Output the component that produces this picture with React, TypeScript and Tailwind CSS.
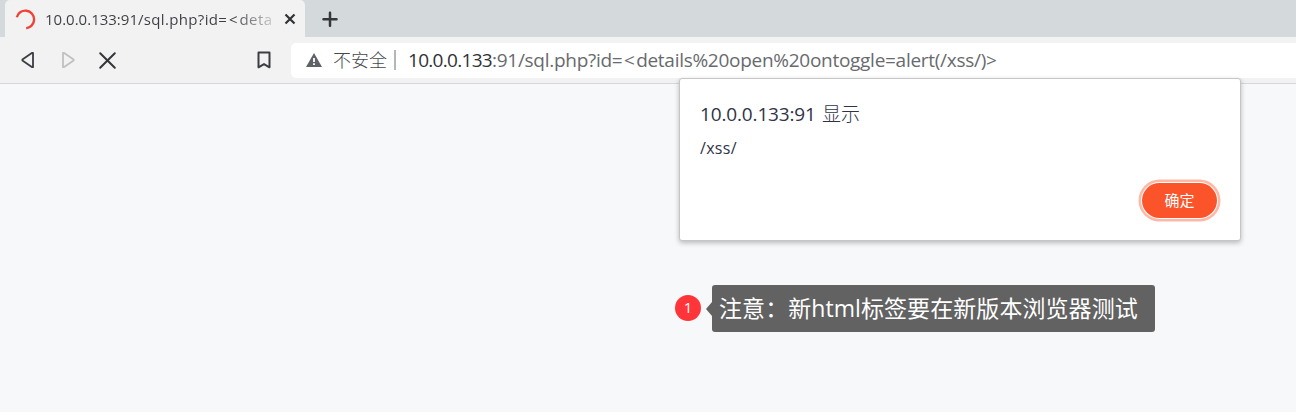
const latin = "font-['Open_Sans','Noto_Sans_CJK_SC',sans-serif]";

function Tab() {
  return (
    <div className="ml-[5px] flex h-[37px] w-[300px] items-center rounded-t-[5px] bg-[#f2f2f2] pl-[10px]">
      <svg className="mt-px size-[21px] shrink-0" viewBox="0 0 21 21" fill="none" stroke="#ee4438" strokeWidth="2.4">
        <path d="M1.8 8.2A8.8 8.8 0 1 1 11.2 19.2" />
      </svg>
      <div className="ml-[9px] w-[229px] whitespace-nowrap bg-[linear-gradient(90deg,#3b3d43_82%,#3b3d4330_100%)] bg-clip-text text-[15px] leading-[22px] text-transparent">
        10.0.0.133:91<span className="tracking-[0.35px]">/sql.php?id</span><span className="tracking-[2px]">=&lt;</span><span className="tracking-[0.4px]">deta</span>
      </div>
      <svg className="ml-[10px] size-3 shrink-0" viewBox="0 0 12 12" stroke="#303236" strokeWidth="2.2">
        <path d="M1.5 1.5l9 9M10.5 1.5l-9 9" />
      </svg>
    </div>
  );
}

function Toolbar() {
  return (
    <div className="flex h-[47px] items-center border-b border-[#d5d7da] bg-[#f2f2f2]">
      <svg className="ml-5 h-[18px] w-4 shrink-0" viewBox="0 0 16 18" fill="none" stroke="#3b3d42" strokeWidth="1.8" strokeLinejoin="round">
        <path d="M13 1.8v14.4h-.8L2.4 9.6V8.4L12.2 1.8z" />
      </svg>
      <svg className="ml-[25px] h-[18px] w-4 shrink-0" viewBox="0 0 16 18" fill="none" stroke="#bfc0c2" strokeWidth="1.8" strokeLinejoin="round">
        <path d="M2 1.8v14.4h.8l9.8-6.6V8.4L2.8 1.8z" />
      </svg>
      <svg className="ml-[21px] size-[19px] shrink-0" viewBox="0 0 19 19" stroke="#34363a" strokeWidth="2" strokeLinecap="round">
        <path d="M2.2 2.2l14.6 14.6M16.8 2.2L2.2 16.8" />
      </svg>
      <svg className="ml-[139px] h-[18px] w-4 shrink-0" viewBox="0 0 16 18" fill="none" stroke="#3b3d42" strokeWidth="2" strokeLinejoin="round">
        <path d="M2.5 1.5h11v14.8L8 13.1l-5.5 3.2z" />
      </svg>
      <div className="ml-[19px] flex h-[35px] flex-1 items-center rounded-l-[5px] bg-white pl-[15px]">
        <svg className="h-[14px] w-4 shrink-0" viewBox="0 0 16 14">
          <path d="M8 0l8 14H0z" fill="#5f6368" />
          <path d="M7.1 5h1.8v4H7.1zM7.1 10.2h1.8V12H7.1z" fill="white" />
        </svg>
        <span className="ml-[11px] w-[54px] whitespace-nowrap text-[18px] font-light leading-6 text-[#45484d]">不安全</span>
        <span className="ml-[7px] h-5 w-[2px] bg-[#b5b6b8]" />
        <span className="ml-[12px] whitespace-nowrap text-[19px] leading-6 tracking-[-0.28px] text-[#686a6e]">
          <span className="tracking-[-0.7px] text-[#303236]">10.0.0.133</span>:91/sql.php?id<span className="tracking-[1.3px]">=&lt;</span>details%20open%20ontoggle=alert(/xss/)&gt;
        </span>
      </div>
    </div>
  );
}

function AlertDialog() {
  return (
    <div className="absolute left-[679px] top-[78px] flex h-[163px] w-[562px] flex-col rounded-[3px] border border-[#c5c6c8] bg-white px-5 pt-[22px] shadow-[0_2px_5px_rgba(0,0,0,0.25)]">
      <div className="flex whitespace-nowrap text-[19px] leading-[26px] text-[#303346]">
        <span className="w-[122px] tracking-[-0.15px]">10.0.0.133:91</span>
        <span className="font-light">显示</span>
      </div>
      <div className="mt-[10px] text-[16px] leading-[22px] tracking-[0.3px] text-[#303346]">/xss/</div>
      <button className="mr-[3px] mt-[24px] h-[35px] w-[75px] self-end rounded-full bg-[#fb542b] text-[15px] leading-[35px] text-white shadow-[0_0_0_1px_white,0_0_0_3.5px_#fdb9a8]">
        确定
      </button>
    </div>
  );
}

function Annotation() {
  return (
    <div className="absolute left-[675px] top-[285px] flex items-center">
      <div className="mb-px flex size-[26px] items-center justify-center rounded-full bg-[#ff3539] pb-[2px] text-[15px] leading-none text-white">1</div>
      <svg className="ml-[5px] h-[14px] w-[6px]" viewBox="0 0 6 14">
        <path d="M6 0v14L0 7z" fill="#626262" />
      </svg>
      <div className="h-[47px] w-[443px] whitespace-nowrap rounded-[3px] bg-[#626262] pl-[7px] text-[23px] leading-[46px] tracking-[0.07px] text-white">
        注意：新html标签要在新版本浏览器测试
      </div>
    </div>
  );
}

export default function App() {
  return (
    <div className={`relative h-[412px] w-[1296px] overflow-hidden bg-[#f7f8fa] ${latin}`}>
      <div className="flex h-[37px] items-center bg-[#d4d9dc]">
        <Tab />
        <svg className="ml-[17px] size-4" viewBox="0 0 16 16" stroke="#34363a" strokeWidth="2.5" strokeLinecap="round">
          <path d="M8 1.8v13M1.5 8.3h13" />
        </svg>
      </div>
      <Toolbar />
      <AlertDialog />
      <Annotation />
    </div>
  );
}
